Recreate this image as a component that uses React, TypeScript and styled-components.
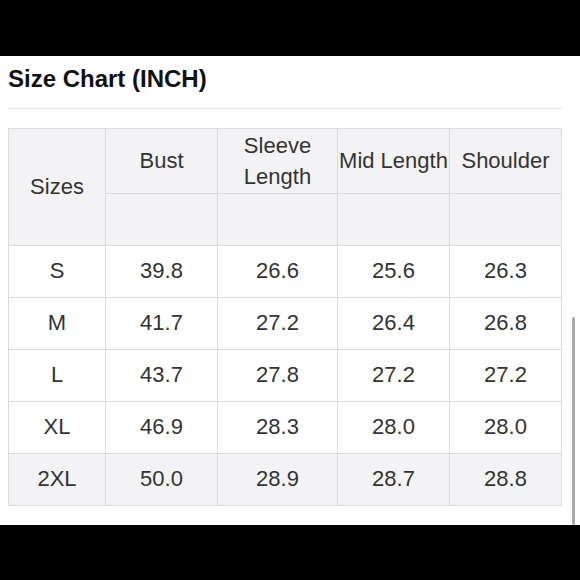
import * as React from "react";
import styled, { createGlobalStyle } from "styled-components";

const GlobalStyle = createGlobalStyle`
  html, body {
    margin: 0;
    padding: 0;
    background: #000;
  }
  body {
    font-family: "Liberation Sans", Arial, sans-serif;
    color: #333;
  }
`;

const columns = ["Bust", "Sleeve Length", "Mid Length", "Shoulder"];
const widths = [97, 112, 120, 112, 112];

const rows = [
  ["S", "39.8", "26.6", "25.6", "26.3"],
  ["M", "41.7", "27.2", "26.4", "26.8"],
  ["L", "43.7", "27.8", "27.2", "27.2"],
  ["XL", "46.9", "28.3", "28.0", "28.0"],
  ["2XL", "50.0", "28.9", "28.7", "28.8"],
];

const App: React.FC = () => {
  return (
    <Screen>
      <GlobalStyle />
      <Band />
      <Sheet>
        <Title>Size Chart (INCH)</Title>
        <Divider />
        <Table>
          <colgroup>
            {widths.map((w, i) => (
              <col key={i} style={{ width: w }} />
            ))}
          </colgroup>
          <thead>
            <tr>
              <HeadCell rowSpan={2}>Sizes</HeadCell>
              {columns.map(c => (
                <HeadCell key={c} $tall>
                  {c === "Sleeve Length" ? (
                    <>
                      Sleeve
                      <br />
                      Length
                    </>
                  ) : (
                    c
                  )}
                </HeadCell>
              ))}
            </tr>
            <tr>
              {columns.map(c => (
                <HeadCell key={c} />
              ))}
            </tr>
          </thead>
          <tbody>
            {rows.map((r, i) => (
              <Row key={r[0]} $shaded={i === rows.length - 1}>
                {r.map((v, j) => (
                  <Cell key={j}>{v}</Cell>
                ))}
              </Row>
            ))}
          </tbody>
        </Table>
        <ScrollThumb />
      </Sheet>
      <Band />
    </Screen>
  );
};

export default App;

const Screen = styled.div`
  width: 580px;
  height: 580px;
  display: flex;
  flex-direction: column;
  background: #000;
  overflow: hidden;
`;

const Band = styled.div`
  flex: 1;
  background: #000;
`;

const Sheet = styled.div`
  position: relative;
  height: 469px;
  background: #fff;
  padding: 8px 18px 0 8px;
  box-sizing: border-box;
`;

const Title = styled.h2`
  margin: 0;
  font-size: 24px;
  line-height: 30px;
  font-weight: 700;
  color: #111;
`;

const Divider = styled.div`
  height: 1px;
  background: #e3e3e3;
  margin: 14px 0 19px;
`;

const Table = styled.table`
  width: 554px;
  border-collapse: collapse;
  table-layout: fixed;
  font-size: 22px;
  color: #333;
`;

const HeadCell = styled.th<{ $tall?: boolean }>`
  background: #f3f3f5;
  border: 1px solid #dcdcdc;
  font-weight: 400;
  text-align: center;
  vertical-align: middle;
  line-height: 31px;
  height: ${p => (p.$tall ? "64px" : "51px")};
  padding: 0;
  white-space: nowrap;
`;

const Row = styled.tr<{ $shaded?: boolean }>`
  background: ${p => (p.$shaded ? "#f3f3f5" : "#fff")};
`;

const Cell = styled.td`
  border: 1px solid #dcdcdc;
  text-align: center;
  vertical-align: middle;
  height: 51px;
  padding: 0;
  line-height: 24px;
`;

const ScrollThumb = styled.div`
  position: absolute;
  right: 5px;
  top: 261px;
  bottom: 0;
  width: 3px;
  border-radius: 2px;
  background: #a9a9a9;
`;
